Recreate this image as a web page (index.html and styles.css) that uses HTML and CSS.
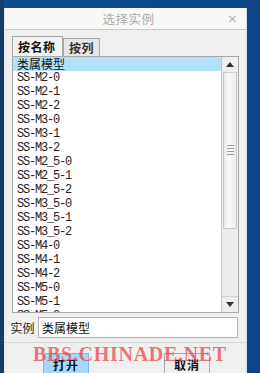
FILE: index.html
```html
<!DOCTYPE html>
<html lang="zh-CN">
<head>
  <meta charset="UTF-8">
  <title>选择实例</title>
  <link rel="stylesheet" href="styles.css">
</head>
<body>

  <div class="dialog">
    <div class="titlebar">
      <span class="title">选择实例</span>
      <span class="close">×</span>
    </div>

    <div class="tabs">
      <div class="tab active">按名称</div>
      <div class="tab">按列</div>
    </div>

    <div class="listbox">
      <div class="items">
        <div class="item selected cjk">类属模型</div>
        <div class="item">SS-M2-0</div>
        <div class="item">SS-M2-1</div>
        <div class="item">SS-M2-2</div>
        <div class="item">SS-M3-0</div>
        <div class="item">SS-M3-1</div>
        <div class="item">SS-M3-2</div>
        <div class="item">SS-M2_5-0</div>
        <div class="item">SS-M2_5-1</div>
        <div class="item">SS-M2_5-2</div>
        <div class="item">SS-M3_5-0</div>
        <div class="item">SS-M3_5-1</div>
        <div class="item">SS-M3_5-2</div>
        <div class="item">SS-M4-0</div>
        <div class="item">SS-M4-1</div>
        <div class="item">SS-M4-2</div>
        <div class="item">SS-M5-0</div>
        <div class="item">SS-M5-1</div>
        <div class="item">SS-M5-2</div>
      </div>
      <div class="scrollbar">
        <div class="sb-btn"><span class="arrow up"></span></div>
        <div class="sb-thumb"><span class="grip"></span></div>
        <div class="sb-track"></div>
        <div class="sb-btn"><span class="arrow down"></span></div>
      </div>
    </div>

    <div class="instance">
      <span class="label">实例</span>
      <div class="field">类属模型</div>
    </div>

    <div class="footer">
      <button class="btn default">打开</button>
      <button class="btn">取消</button>
    </div>

    <div class="watermark">BBS.CHINADE.NET</div>
  </div>

</body>
</html>
```

FILE: styles.css
```css
body {
  margin: 0;
  height: 373px;
  overflow: hidden;
  background: linear-gradient(90deg, #163d69 0, #163d69 4px, #0f4a8c 4px, #0c4585 100%);
  font-family: "Noto Sans CJK SC", "DejaVu Sans", sans-serif;
  font-size: 12px;
  color: #000;
}
.dialog {
  position: relative;
  margin: 8px 0 0 4px;
  width: 241px;
  height: 365px;
  background: #f0f0f0;
  border-left: 1px solid #e4e8ee;
  border-right: 1px solid #d8dde4;
}
.titlebar {
  height: 21px;
  background: #f8f8f8;
  border-bottom: 1px solid #c9c9c9;
  display: flex;
  align-items: center;
  justify-content: center;
  position: relative;
}
.title {
  color: #ababab;
  font-size: 12.5px;
  letter-spacing: 0.5px;
  margin-left: 6px;
}
.close {
  position: absolute;
  right: 8px;
  top: 3px;
  color: #b4b4b4;
  font-family: "DejaVu Sans", sans-serif;
  font-size: 13px;
}
.tabs {
  display: flex;
  align-items: flex-end;
  padding: 6px 0 0 7px;
  height: 20px;
}
.tab {
  height: 17px;
  padding: 0 5px;
  border: 1px solid #a8a8a8;
  border-bottom: none;
  background: #e6e6e6;
  font-weight: bold;
  color: #333;
  line-height: 17px;
  letter-spacing: 0.5px;
}
.tab.active {
  height: 19px;
  line-height: 20px;
  background: #f4f4f4;
  color: #111;
  width: 39px;
}
.listbox {
  margin-left: 7px;
  width: 225px;
  height: 255px;
  border: 1px solid #a9a9a9;
  background: #fff;
  display: flex;
  overflow: hidden;
}
.items {
  flex: 1;
}
.item {
  height: 14px;
  line-height: 14px;
  padding-left: 4px;
  font-family: "Liberation Mono", monospace;
  font-size: 12px;
  letter-spacing: -1.2px;
  color: #222;
}
.item.cjk {
  font-family: "Noto Sans CJK SC", sans-serif;
  letter-spacing: 0;
}
.item.selected {
  background: #b3e1f8;
  color: #111;
}
.scrollbar {
  width: 16px;
  display: flex;
  flex-direction: column;
  border-left: 1px solid #c4c4c4;
  background: #f0f0f0;
}
.sb-btn {
  height: 15px;
  display: flex;
  align-items: center;
  justify-content: center;
  background: #eeeeee;
  border-bottom: 1px solid #d2d2d2;
}
.sb-btn:last-child {
  border-bottom: none;
  border-top: 1px solid #d2d2d2;
}
.arrow {
  width: 0;
  height: 0;
  border-left: 4px solid transparent;
  border-right: 4px solid transparent;
}
.arrow.up {
  border-bottom: 5px solid #333;
}
.arrow.down {
  border-top: 5px solid #333;
}
.sb-thumb {
  height: 155px;
  margin: 0 1px;
  background: linear-gradient(90deg, #e8e8e8, #fafafa 40%, #ececec);
  border: 1px solid #c6c6c6;
  border-top: none;
  display: flex;
  align-items: center;
  justify-content: center;
}
.grip {
  width: 7px;
  height: 11px;
  background: repeating-linear-gradient(180deg, #9a9a9a 0, #9a9a9a 1px, transparent 1px, transparent 3px);
}
.sb-track {
  flex: 1;
  background: #ededed;
}
.instance {
  display: flex;
  align-items: center;
  margin-top: 4px;
  padding-left: 2px;
  height: 21px;
}
.label {
  width: 31px;
  text-align: center;
  color: #222;
}
.field {
  width: 195px;
  height: 19px;
  line-height: 19px;
  border: 1px solid #b2b2b2;
  background: #fff;
  padding-left: 3px;
  color: #111;
}
.footer {
  margin-top: 4px;
  border-top: 1px solid #d6d6d6;
  display: flex;
  padding: 10px 0 0 38px;
  gap: 75px;
}
.btn {
  width: 46px;
  height: 22px;
  border: 1px solid #a8a8a8;
  background: #efefef;
  font-family: "Noto Sans CJK SC", sans-serif;
  font-size: 12px;
  font-weight: bold;
  color: #111;
  padding: 0;
  letter-spacing: 1px;
}
.btn.default {
  background: #a6d8f7;
  border-color: #7fb8e0;
}
.watermark {
  position: absolute;
  left: 28px;
  top: 335px;
  font-family: "Liberation Serif", serif;
  font-weight: bold;
  font-size: 20px;
  letter-spacing: 0.7px;
  color: rgba(236, 70, 80, 0.75);
}
```
